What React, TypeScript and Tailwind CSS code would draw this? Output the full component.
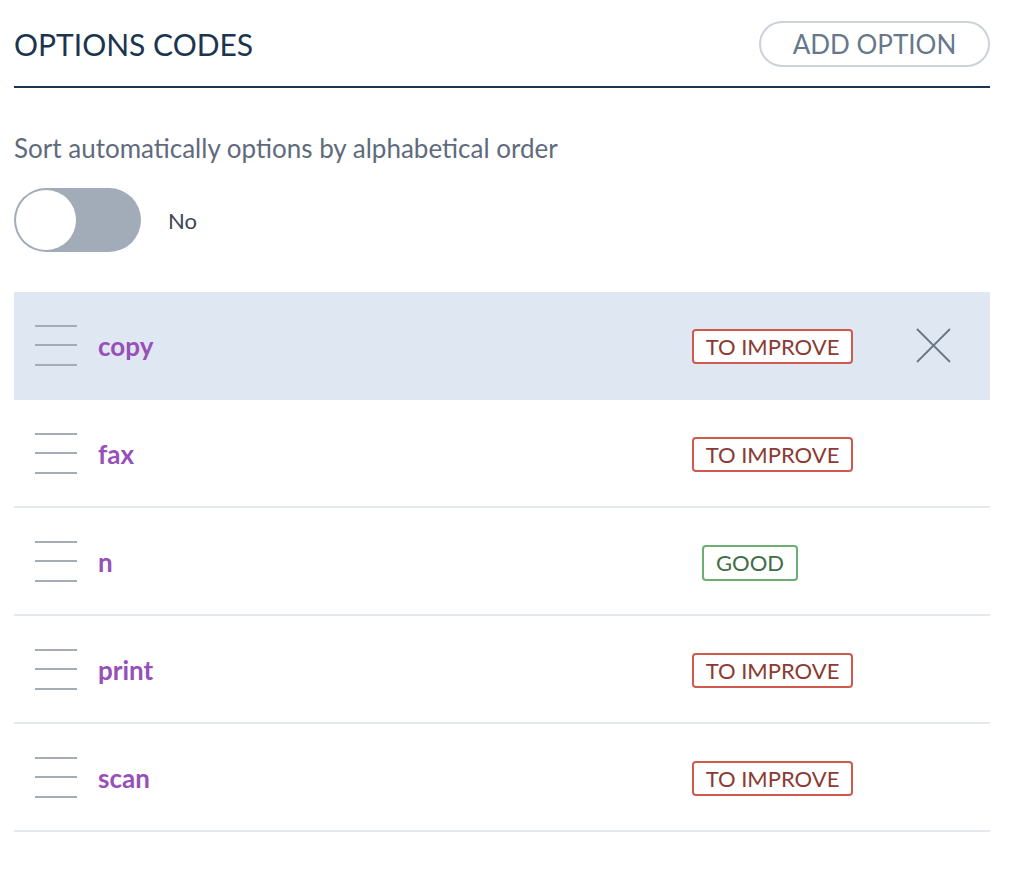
import React from "react";

type Option = {
  code: string;
  status: "improve" | "good";
};

const options: Option[] = [
  { code: "copy", status: "improve" },
  { code: "fax", status: "improve" },
  { code: "n", status: "good" },
  { code: "print", status: "improve" },
  { code: "scan", status: "improve" },
];

function DragHandle() {
  return (
    <div className="flex w-[42px] flex-col gap-[17.5px]">
      <div className="h-[2px] bg-[#a4acb7]" />
      <div className="h-[2px] bg-[#a4acb7]" />
      <div className="h-[2px] bg-[#a4acb7]" />
    </div>
  );
}

function StatusBadge({ status }: { status: Option["status"] }) {
  if (status === "good") {
    return (
      <span className="ml-[10px] flex h-[36px] w-[96px] items-center justify-center rounded-[4px] border-2 border-[#6aae74] bg-white text-[22px] text-[#3f6d46]">
        GOOD
      </span>
    );
  }
  return (
    <span className="flex h-[35px] w-[161px] items-center justify-center rounded-[4px] border-2 border-[#d0594d] bg-white text-[22px] text-[#8a3b34]">
      TO IMPROVE
    </span>
  );
}

function OptionRow({ option, active }: { option: Option; active: boolean }) {
  return (
    <div
      className={
        active
          ? "flex h-[108px] items-center border-b-2 border-[#dfe8f2] bg-[#dfe8f2] pl-[21px] pr-[39px]"
          : "flex h-[108px] items-center border-b-2 border-[#e5e9ee] pl-[21px] pr-[39px]"
      }
    >
      <DragHandle />
      <span className="ml-[21px] mt-[3px] flex-1 text-[26px] font-bold text-[#9650b8]">{option.code}</span>
      <div className="mt-[3px] flex w-[224px] items-center">
        <StatusBadge status={option.status} />
      </div>
      <div className="flex h-[35px] w-[35px] items-center justify-center">
        {active && (
          <svg width="35" height="35" viewBox="0 0 35 35" fill="none">
            <path d="M1 1L34 34M34 1L1 34" stroke="#6b7785" strokeWidth="1.8" />
          </svg>
        )}
      </div>
    </div>
  );
}

export default function App() {
  return (
    <div className="min-h-[884px] w-[1034px] bg-white pl-[14px] pr-[44px] font-['Lato',sans-serif]">
      {/* Header */}
      <div className="flex items-center justify-between border-b-2 border-[#1b3550] pb-[19px] pt-[21px]">
        <h1 className="text-[30px] text-[#1b3550]">OPTIONS CODES</h1>
        <button className="h-[46px] w-[231px] rounded-full border-2 border-[#cdd2d9] text-[26px] text-[#67778c]">
          ADD OPTION
        </button>
      </div>

      {/* Sort toggle */}
      <p className="mt-[45px] text-[26px] leading-[31px] text-[#5f6b7d]">
        Sort automatically options by alphabetical order
      </p>
      <div className="mt-[24px] flex items-center gap-[27px]">
        <div className="flex h-[64px] w-[127px] items-center rounded-full bg-[#a2abb8] p-[1px]">
          <div className="h-[62px] w-[62px] rounded-full border border-[#a2abb8] bg-white" />
        </div>
        <span className="text-[22px] text-[#3b4556]">No</span>
      </div>

      {/* Options list */}
      <div className="mt-[40px]">
        {options.map((o, i) => (
          <OptionRow key={o.code} option={o} active={i === 0} />
        ))}
      </div>
    </div>
  );
}
